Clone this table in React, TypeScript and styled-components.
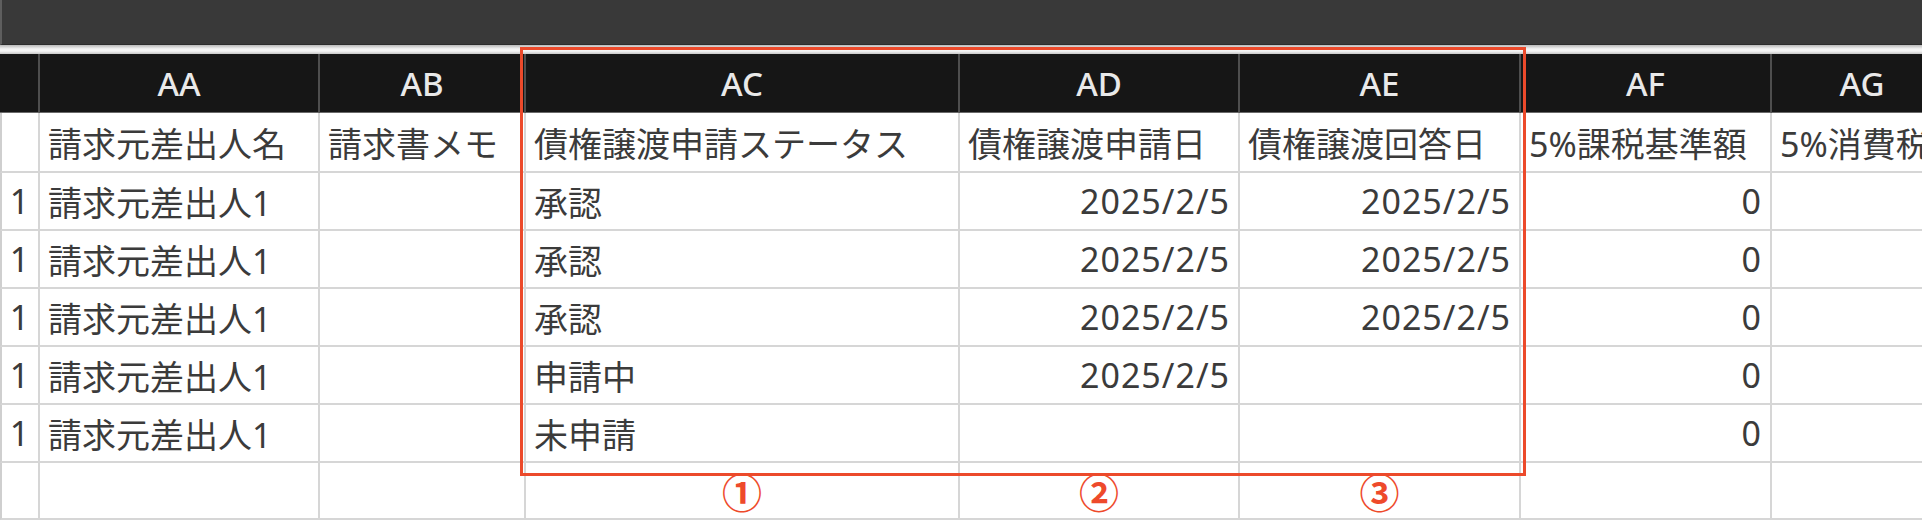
import React from 'react';
import styled, { createGlobalStyle } from 'styled-components';

const GlobalStyle = createGlobalStyle`
  html, body {
    margin: 0;
    padding: 0;
    background: #ffffff;
  }
  body {
    font-family: "Noto Sans", "Noto Sans CJK JP", sans-serif;
  }
`;

const Screen = styled.div`
  position: relative;
  width: 1922px;
  height: 520px;
  overflow: hidden;
  background: #ffffff;
  display: flex;
  flex-direction: column;
`;

const TitleBar = styled.div`
  flex: none;
  height: 45px;
  box-sizing: border-box;
  background: #393939;
  border-left: 2px solid #5e5e5e;
  border-bottom: 1px solid #2c2c2c;
`;

const Divider = styled.div`
  flex: none;
  height: 9px;
  background: linear-gradient(
    #b9b9b9 0px,
    #d6d6d6 2px,
    #f4f4f4 4px,
    #f4f4f4 6px,
    #c8c8c8 9px
  );
`;

const Sheet = styled.div`
  flex: 1;
  display: grid;
  grid-template-columns: 40px 280px 206px 434px 280px 281px 251px 182px;
  grid-template-rows: 59px 60px repeat(5, 58px) 1fr;
`;

const ColumnLetter = styled.div`
  box-sizing: border-box;
  display: flex;
  align-items: center;
  justify-content: center;
  background: #161616;
  color: #e9e9e9;
  font-size: 33px;
  font-weight: 500;
  border-right: 2px solid #4e4e4e;
  border-bottom: 1px solid #6a6a6a;
  white-space: nowrap;
`;

type Align = 'left' | 'right' | 'center';

const Cell = styled.div<{ $align?: Align; $numeric?: boolean; $first?: boolean }>`
  box-sizing: border-box;
  display: flex;
  align-items: center;
  justify-content: ${(p) =>
    p.$align === 'right' ? 'flex-end' : p.$align === 'center' ? 'center' : 'flex-start'};
  padding: 0 8px;
  background: #ffffff;
  color: #3b3b3b;
  font-size: 34px;
  letter-spacing: ${(p) => (p.$numeric ? '1px' : '0')};
  border-right: 2px solid #d6d6d6;
  border-bottom: 2px solid #d6d6d6;
  border-left: ${(p) => (p.$first ? '2px solid #cfcfcf' : 'none')};
  white-space: nowrap;
  overflow: hidden;
`;

const Marker = styled.span`
  color: #ee4a2b;
  font-family: "Noto Sans CJK JP", sans-serif;
  font-size: 40px;
  font-weight: 700;
  line-height: 1;
`;

const Highlight = styled.div`
  position: absolute;
  left: 520px;
  top: 47px;
  width: 1006px;
  height: 429px;
  box-sizing: border-box;
  border: 3px solid #ec4a2b;
  pointer-events: none;
`;

const letters = ['AA', 'AB', 'AC', 'AD', 'AE', 'AF', 'AG'];
const labels = [
  '請求元差出人名',
  '請求書メモ',
  '債権譲渡申請ステータス',
  '債権譲渡申請日',
  '債権譲渡回答日',
  '5%課税基準額',
  '5%消費税額',
];

type Row = { name: string; status: string; applied: string; answered: string; base: string };

const rows: Row[] = [
  { name: '請求元差出人1', status: '承認', applied: '2025/2/5', answered: '2025/2/5', base: '0' },
  { name: '請求元差出人1', status: '承認', applied: '2025/2/5', answered: '2025/2/5', base: '0' },
  { name: '請求元差出人1', status: '承認', applied: '2025/2/5', answered: '2025/2/5', base: '0' },
  { name: '請求元差出人1', status: '申請中', applied: '2025/2/5', answered: '', base: '0' },
  { name: '請求元差出人1', status: '未申請', applied: '', answered: '', base: '0' },
];

export default function App() {
  return (
    <>
      <GlobalStyle />
      <Screen>
        <TitleBar />
        <Divider />
        <Sheet>
          <ColumnLetter />
          {letters.map((l) => (
            <ColumnLetter key={l}>{l}</ColumnLetter>
          ))}

          <Cell $first />
          {labels.map((l) => (
            <Cell key={l}>{l}</Cell>
          ))}

          {rows.map((r, i) => (
            <React.Fragment key={i}>
              <Cell $first $align="center" $numeric>
                1
              </Cell>
              <Cell>{r.name}</Cell>
              <Cell />
              <Cell>{r.status}</Cell>
              <Cell $align="right" $numeric>
                {r.applied}
              </Cell>
              <Cell $align="right" $numeric>
                {r.answered}
              </Cell>
              <Cell $align="right" $numeric>
                {r.base}
              </Cell>
              <Cell />
            </React.Fragment>
          ))}

          <Cell $first />
          <Cell />
          <Cell />
          <Cell $align="center">
            <Marker>①</Marker>
          </Cell>
          <Cell $align="center">
            <Marker>②</Marker>
          </Cell>
          <Cell $align="center">
            <Marker>③</Marker>
          </Cell>
          <Cell />
          <Cell />
        </Sheet>
        <Highlight />
      </Screen>
    </>
  );
}
